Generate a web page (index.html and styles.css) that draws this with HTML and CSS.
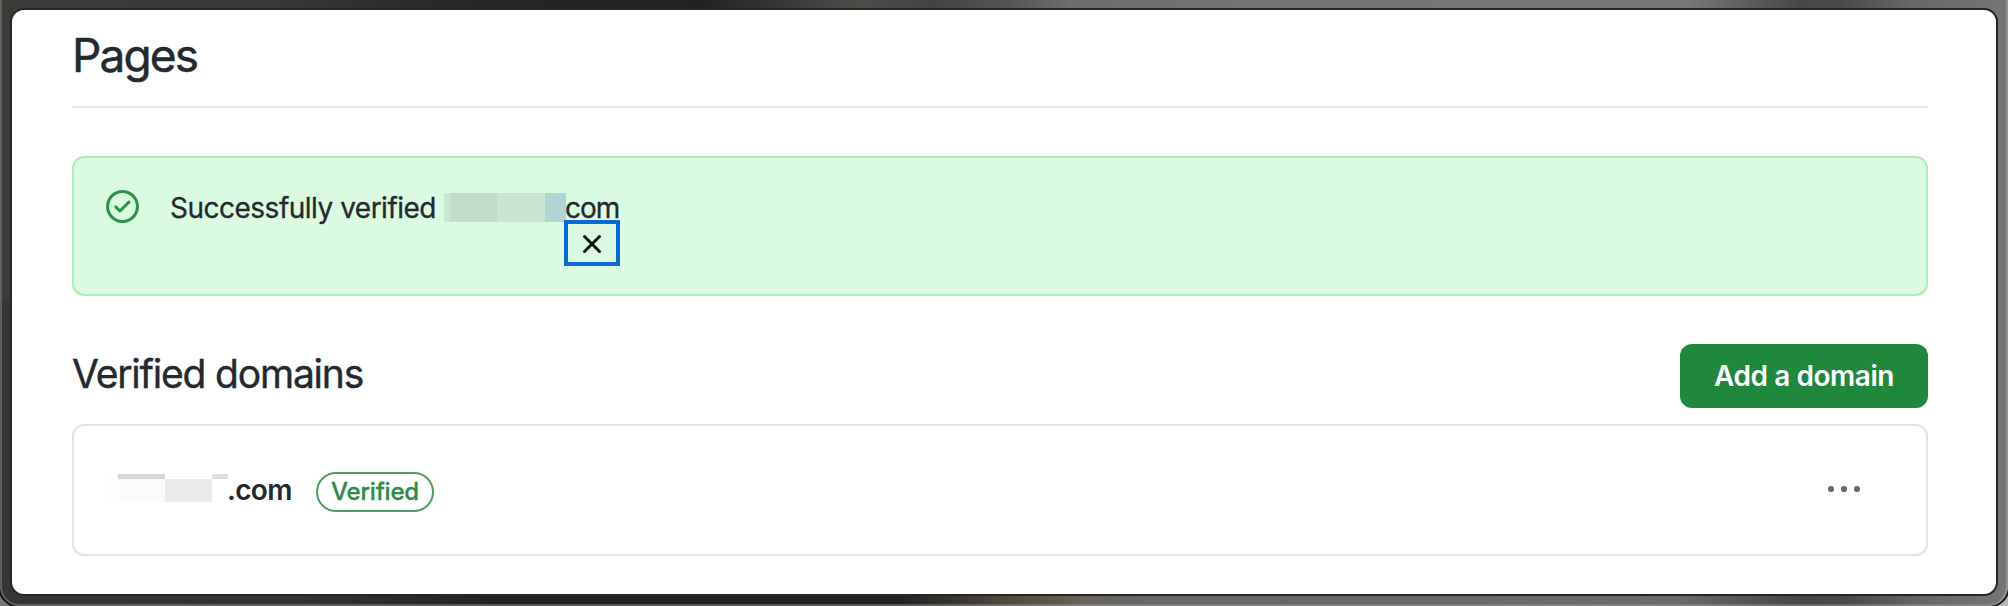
FILE: index.html
```html
<!DOCTYPE html>
<html lang="en">
<head>
<meta charset="utf-8">
<title>Pages</title>
<link rel="stylesheet" href="styles.css">
</head>
<body>
<div class="desktop">
  <div class="frame">
    <main class="window">
      <h1 class="page-title">Pages</h1>
      <section class="flash">
        <svg class="flash-icon" viewBox="0 0 16 16" aria-hidden="true"><path d="M0 8a8 8 0 1 1 16 0A8 8 0 0 1 0 8Zm8-6.5a6.5 6.5 0 1 0 0 13 6.5 6.5 0 0 0 0-13Zm3.78 4.72-4.5 4.5a.75.75 0 0 1-1.06 0l-2-2a.75.75 0 0 1 1.06-1.06L6.75 9.19l3.97-3.97a.75.75 0 0 1 1.06 1Z"/></svg>
        <div class="flash-body">
          <p class="flash-text"><span class="message">Successfully verified</span><span class="redacted"><i class="r1"></i><i class="r2"></i><i class="r3"></i><i class="r4"></i></span><span class="tld">com</span></p>
          <button class="close" aria-label="Dismiss"><svg viewBox="0 0 20 20"><path d="M2.5 2.5l15 15M17.5 2.5l-15 15"/></svg></button>
        </div>
      </section>
      <header class="subhead">
        <h2 class="subhead-title">Verified domains</h2>
        <button class="add">Add a domain</button>
      </header>
      <section class="domains">
        <span class="mosaic"><i class="m1"></i><i class="m2"></i><i class="m3"></i><i class="m4"></i></span>
        <strong class="domain">.com</strong>
        <span class="label">Verified</span>
        <svg class="kebab" viewBox="0 0 34 8"><circle cx="4" cy="4" r="3.1"/><circle cx="17" cy="4" r="3.1"/><circle cx="30" cy="4" r="3.1"/></svg>
      </section>
    </main>
  </div>
</div>
</body>
</html>
```
FILE: styles.css
```css
* { box-sizing: border-box; }
body { margin: 0; font-family: Inter, "Liberation Sans", sans-serif; color: #24292f; }
h1, h2, p { margin: 0; font-weight: 400; }
button { font: inherit; margin: 0; padding: 0; border: 0; }
i { display: block; }

.desktop {
  width: 2008px; height: 606px; overflow: hidden;
  background: linear-gradient(90deg, #777 50%, #b5b5b5 50%);
}
.frame {
  width: 2008px; height: 606px; padding: 8px 10px 10px;
  border-radius: 0 0 20px 20px;
  box-shadow: inset 2px 0 #5f5f5d, inset -2px 0 #939393, inset 0 -2px rgba(150,150,150,.45), 0 0 0 2px #151515;
  background:
    linear-gradient(90deg, #3c3b38 0, #393938 270px, #2a2c2a 410px, #252723 490px, #222 700px, #343333 765px, #4f4c48 860px, #434343 935px, #525453 1004px, #6b6e6e 1070px, #757575 1300px, #767676 1690px, #5a5a5a 1755px, #484848 1800px, #494949 1840px, #676767 1910px, #757575 2008px) 0 0 / 100% 300px no-repeat,
    linear-gradient(90deg, #363634 0, #333433 300px, #242626 450px, #202020 510px, #222 900px, #37342f 950px, #4e483d 1004px, #666359 1080px, #676767 1150px, #6a6a6a 1680px, #555 1750px, #454545 1805px, #484848 1840px, #666 1920px, #757575 2008px) 0 300px / 100% 306px no-repeat;
}
.window {
  height: 588px; padding: 0 68px 0 60px;
  background: #fff; border: 2px solid #262626; border-radius: 14px;
}
.page-title {
  height: 98px; padding-top: 16px; border-bottom: 2px solid #e5e9ed;
  font-size: 46px; line-height: 58px; letter-spacing: -1.9px;
  -webkit-text-stroke: .5px;
}

.flash {
  display: flex; align-items: flex-start;
  height: 140px; margin-top: 48px; padding: 32px 31px;
  background: #dafbe1; border: 2px solid #aeebbc; border-radius: 12px;
}
.flash-icon { width: 33px; height: 33px; margin-left: 1px; fill: #2c9147; }
.flash-body { display: flex; flex-direction: column; align-items: flex-end; margin-left: 31px; }
.flash-text {
  display: flex; height: 30px; margin-top: 3px;
  font-size: 28px; line-height: 30px; -webkit-text-stroke: .3px;
}
.message { width: 274px; letter-spacing: -.5px; white-space: nowrap; }
.redacted { display: flex; width: 122px; height: 29px; }
.r1 { width: 6px; background: #cbe7d1; }
.r2 { width: 47px; background: #c2dec9; }
.r3 { width: 48px; background: #c9e6d0; }
.r4 { width: 21px; background: #afd5d5; }
.tld { width: 54px; margin-left: -1px; margin-right: 1px; letter-spacing: -1px; }
.close {
  display: grid; place-items: center;
  width: 56px; height: 46px; margin-top: -3px; padding-top: 2px;
  background: transparent; border: 4px solid #0969da;
}
.close svg { width: 20px; height: 20px; fill: none; stroke: #111; stroke-width: 3; stroke-linecap: round; }

.subhead { display: flex; justify-content: space-between; align-items: flex-end; height: 65px; margin-top: 47px; }
.subhead-title { height: 58px; font-size: 39px; line-height: 48px; letter-spacing: -1.2px; -webkit-text-stroke: .4px; }
.add {
  width: 248px; height: 64px; border-radius: 12px;
  background: #1f883d; color: #fff;
  font-size: 28px; font-weight: 600; letter-spacing: -.45px;
}

.domains {
  display: flex; align-items: flex-start;
  height: 132px; margin-top: 16px; padding: 48px 65px 0 32px;
  border: 2px solid #dde3ea; border-radius: 12px;
}
.mosaic { display: grid; grid-template-columns: 12px 47px 47px 16px; height: 28px; align-items: start; }
.m1 { height: 28px; background: #fbfefd; }
.m2 { height: 28px; background: #fbfbfb; border-top: 5px solid #d5d6d8; }
.m3 { height: 23px; margin-top: 5px; background: #ebebeb; }
.m4 { height: 5px; background: #dcdddd; }
.domain { width: 89px; margin-left: -1px; font-size: 28px; font-weight: 600; line-height: 32px; letter-spacing: -.7px; }
.label {
  width: 118px; height: 40px; margin-top: -2px;
  border: 2px solid #4f9f65; border-radius: 20px;
  color: #2a8d45; font-size: 24px; font-weight: 500; line-height: 36px; text-align: center; letter-spacing: -.2px;
  -webkit-text-stroke: .3px;
}
.kebab { width: 34px; height: 8px; margin: 11px 0 0 auto; fill: #636b76; }
```
